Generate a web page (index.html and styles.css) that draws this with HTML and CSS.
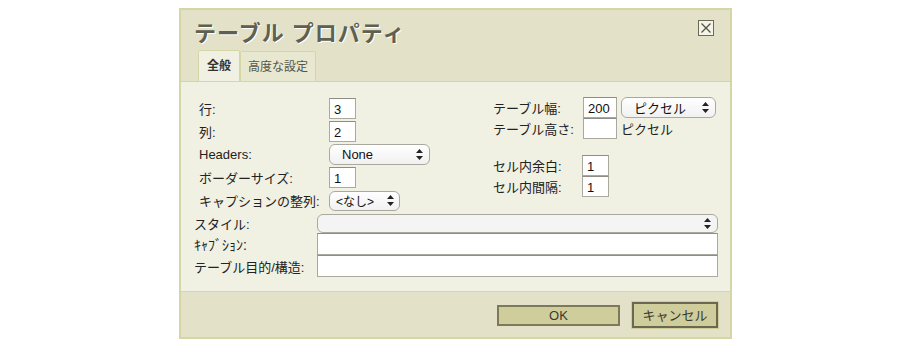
FILE: index.html
```html
<!DOCTYPE html>
<html lang="ja">
<head>
    <meta charset="UTF-8">
    <title>テーブル プロパティ</title>
    <link rel="stylesheet" href="styles.css">
</head>
<body>
    <div class="dialog">
        <div class="dialog-head">
            <div class="title-row">
                <h1 class="title">テーブル プロパティ</h1>
                <span class="close">
                    <svg width="16" height="16" viewBox="0 0 16 16">
                        <rect x="0.5" y="0.5" width="15" height="15" fill="#f4f4ea" stroke="#6b6b55"/>
                        <path d="M3.5 3.5 L12.5 12.5 M12.5 3.5 L3.5 12.5" stroke="#55553f" stroke-width="1.3"/>
                    </svg>
                </span>
            </div>
            <div class="tabs">
                <span class="tab active">全般</span>
                <span class="tab">高度な設定</span>
            </div>
        </div>

        <div class="dialog-body">
            <div class="columns">
                <div class="grid left">
                    <label>行:</label>
                    <input class="num" type="text" value="3">
                    <label>列:</label>
                    <input class="num" type="text" value="2">
                    <label>Headers:</label>
                    <div class="select headers"><span>None</span><svg class="arrows" width="7" height="11" viewBox="0 0 7 11"><path d="M3.5 0 L7 4 L0 4 Z M3.5 11 L7 7 L0 7 Z" fill="#222"/></svg></div>
                    <label>ボーダーサイズ:</label>
                    <input class="num" type="text" value="1">
                    <label>キャプションの整列:</label>
                    <div class="select align"><span>&lt;なし&gt;</span><svg class="arrows" width="7" height="11" viewBox="0 0 7 11"><path d="M3.5 0 L7 4 L0 4 Z M3.5 11 L7 7 L0 7 Z" fill="#222"/></svg></div>
                </div>

                <div class="right">
                    <div class="grid size">
                        <label>テーブル幅:</label>
                        <div class="pair">
                            <input class="wide" type="text" value="200">
                            <div class="select unit"><span>ピクセル</span><svg class="arrows" width="7" height="11" viewBox="0 0 7 11"><path d="M3.5 0 L7 4 L0 4 Z M3.5 11 L7 7 L0 7 Z" fill="#222"/></svg></div>
                        </div>
                        <label>テーブル高さ:</label>
                        <div class="pair">
                            <input class="wide" type="text" value="">
                            <span class="unit-text">ピクセル</span>
                        </div>
                    </div>
                    <div class="grid cells">
                        <label>セル内余白:</label>
                        <input class="num" type="text" value="1">
                        <label>セル内間隔:</label>
                        <input class="num" type="text" value="1">
                    </div>
                </div>
            </div>

            <div class="grid full">
                <label>スタイル:</label>
                <div class="select style"><span></span><svg class="arrows" width="7" height="11" viewBox="0 0 7 11"><path d="M3.5 0 L7 4 L0 4 Z M3.5 11 L7 7 L0 7 Z" fill="#222"/></svg></div>
                <label class="narrow">ｷｬﾌﾞｼｮﾝ:</label>
                <input class="long" type="text" value="">
                <label>テーブル目的/構造:</label>
                <input class="long" type="text" value="">
            </div>
        </div>

        <div class="dialog-foot">
            <button class="btn ok">OK</button>
            <button class="btn cancel">キャンセル</button>
        </div>
    </div>
</body>
</html>
```

FILE: styles.css
```css
body {
    margin: 0;
    background-color: #ffffff;
    font-family: "Liberation Sans", "Noto Sans CJK JP", sans-serif;
    font-size: 13px;
    color: #222;
}

/* Fenêtre de dialogue */
.dialog {
    margin: 8px 0 0 179px;
    width: 549px;
    border: 2px solid #d6d5a6;
    background-color: #e3e2c8;
}

.dialog-head {
    padding: 0 0 0 12px;
}

.title-row {
    display: flex;
    justify-content: space-between;
    align-items: flex-start;
    height: 40px;
}

.title {
    margin: 5px 0 0 1px;
    font-size: 22px;
    font-weight: bold;
    color: #5f5f52;
    text-shadow: 1px 1px 0 #ffffff;
    letter-spacing: 1px;
}

.close {
    margin: 10px 16px 0 0;
    height: 16px;
}

.tabs {
    display: flex;
    padding-left: 5px;
    height: 31px;
    align-items: flex-end;
}

.tab {
    display: block;
    height: 29px;
    line-height: 30px;
    padding: 0 7px;
    border: 1px solid #d6d5a6;
    border-bottom: none;
    border-radius: 2px 2px 0 0;
    color: #55554a;
    font-size: 12px;
    background-color: #e8e7d0;
}

.tab.active {
    height: 30px;
    padding: 0 8px;
    font-weight: bold;
    color: #333;
    background-color: #f0f0e3;
}

/* Contenu */
.dialog-body {
    box-sizing: border-box;
    background-color: #f0f0e3;
    border-top: 1px solid #d6d5a6;
    border-bottom: 1px solid #d6d5a6;
    height: 211px;
    padding: 16px 13px 0 13px;
}

.columns {
    display: flex;
    padding-left: 5px;
}

.grid {
    display: grid;
    align-items: center;
}

.grid label {
    color: #222;
}

.left {
    grid-template-columns: 130px auto;
    row-gap: 2px;
    grid-auto-rows: 21px;
    width: 294px;
}

.right {
    display: flex;
    flex-direction: column;
}

.size {
    grid-template-columns: 90px auto;
    grid-auto-rows: 21px;
    margin-top: -1px;
}

.cells {
    grid-template-columns: 89px auto;
    grid-auto-rows: 21px;
    margin-top: 16px;
}

.pair {
    display: flex;
    align-items: center;
    gap: 4px;
    height: 21px;
}

input {
    box-sizing: border-box;
    height: 21px;
    border: 1px solid #a9a9a0;
    border-top-color: #8d8d85;
    background-color: #ffffff;
    font-family: "Liberation Sans", "Noto Sans CJK JP", sans-serif;
    font-size: 13px;
    color: #111;
    padding: 1px 4px 0 4px;
    margin: 0;
}

.num {
    width: 27px;
}

.wide {
    width: 34px;
}

.long {
    width: 401px;
    height: 22px;
}

.unit-text {
    font-size: 13px;
    color: #222;
}

/* Listes déroulantes */
.select {
    box-sizing: border-box;
    display: flex;
    align-items: center;
    justify-content: space-between;
    height: 21px;
    border: 1px solid #a9a9a0;
    border-radius: 6px;
    background: linear-gradient(#ffffff, #f1f1f1);
    padding: 0 6px 0 10px;
    font-size: 13px;
    color: #111;
}

.headers {
    width: 101px;
}

.headers span {
    padding-left: 2px;
}

.align {
    width: 71px;
    height: 20px;
    padding: 0 5px 0 6px;
    font-size: 12px;
}

.unit {
    width: 95px;
    padding-left: 12px;
}

.style {
    width: 401px;
    height: 19px;
    background: #f4f4f4;
}

.full {
    grid-template-columns: 123px auto;
    grid-template-rows: 20px 22px 22px;
    margin-top: 2px;
}

.narrow {
    font-size: 14px;
}

/* Pied */
.dialog-foot {
    display: flex;
    justify-content: flex-end;
    align-items: center;
    gap: 12px;
    height: 45px;
    padding-right: 12px;
}

.btn {
    height: 21px;
    border: 2px solid #7c7a5a;
    background-color: #cfcd9b;
    font-family: "Liberation Sans", "Noto Sans CJK JP", sans-serif;
    font-size: 13px;
    color: #3a3a2e;
    padding: 0;
}

.ok {
    width: 123px;
    margin-top: 1px;
}

.cancel {
    width: 86px;
    height: 26px;
    border-color: #6a6850;
    outline: 1px solid #cfcd9b;
}
```
